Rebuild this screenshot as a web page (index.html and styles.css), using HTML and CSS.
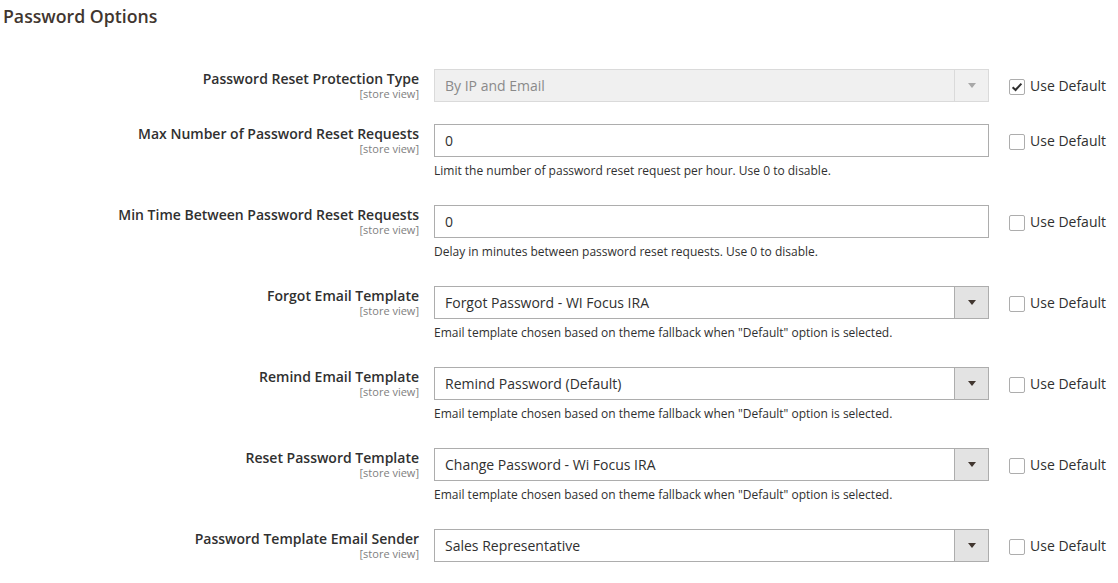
FILE: index.html
```html
<!DOCTYPE html>
<html>
<head>
<meta charset="utf-8">
<link rel="stylesheet" href="styles.css">
</head>
<body>
<div class="page">
  <h2 class="section-title">Password Options</h2>
  <div class="fields">
    <div class="row">
      <div class="label"><span class="label-text">Password Reset Protection Type</span><span class="scope">[store view]</span></div>
      <div class="control">
        <div class="select disabled"><span class="value">By IP and Email</span><span class="arrow"><i></i></span></div>
      </div>
      <label class="use-default"><span class="cb checked"><svg viewBox="0 0 16 16" width="16" height="16"><path d="M3.6 8.2 L6.6 11 L12.4 4.6" fill="none" stroke="#303030" stroke-width="2"/></svg></span>Use Default</label>
    </div>
    <div class="row">
      <div class="label"><span class="label-text">Max Number of Password Reset Requests</span><span class="scope">[store view]</span></div>
      <div class="control">
        <div class="input"><span class="value">0</span></div>
        <div class="note">Limit the number of password reset request per hour. Use 0 to disable.</div>
      </div>
      <label class="use-default"><span class="cb"></span>Use Default</label>
    </div>
    <div class="row">
      <div class="label"><span class="label-text">Min Time Between Password Reset Requests</span><span class="scope">[store view]</span></div>
      <div class="control">
        <div class="input"><span class="value">0</span></div>
        <div class="note">Delay in minutes between password reset requests. Use 0 to disable.</div>
      </div>
      <label class="use-default"><span class="cb"></span>Use Default</label>
    </div>
    <div class="row">
      <div class="label"><span class="label-text">Forgot Email Template</span><span class="scope">[store view]</span></div>
      <div class="control">
        <div class="select"><span class="value">Forgot Password - WI Focus IRA</span><span class="arrow"><i></i></span></div>
        <div class="note">Email template chosen based on theme fallback when "Default" option is selected.</div>
      </div>
      <label class="use-default"><span class="cb"></span>Use Default</label>
    </div>
    <div class="row">
      <div class="label"><span class="label-text">Remind Email Template</span><span class="scope">[store view]</span></div>
      <div class="control">
        <div class="select"><span class="value">Remind Password (Default)</span><span class="arrow"><i></i></span></div>
        <div class="note">Email template chosen based on theme fallback when "Default" option is selected.</div>
      </div>
      <label class="use-default"><span class="cb"></span>Use Default</label>
    </div>
    <div class="row">
      <div class="label"><span class="label-text">Reset Password Template</span><span class="scope">[store view]</span></div>
      <div class="control">
        <div class="select"><span class="value">Change Password - Wi Focus IRA</span><span class="arrow"><i></i></span></div>
        <div class="note">Email template chosen based on theme fallback when "Default" option is selected.</div>
      </div>
      <label class="use-default"><span class="cb"></span>Use Default</label>
    </div>
    <div class="row">
      <div class="label"><span class="label-text">Password Template Email Sender</span><span class="scope">[store view]</span></div>
      <div class="control">
        <div class="select"><span class="value">Sales Representative</span><span class="arrow"><i></i></span></div>
      </div>
      <label class="use-default"><span class="cb"></span>Use Default</label>
    </div>
  </div>
</div>
</body>
</html>
```

FILE: styles.css
```css
html, body {
  margin: 0;
  padding: 0;
  background: #ffffff;
}
body {
  font-family: "Open Sans", "Liberation Sans", sans-serif;
  color: #303030;
}
.page {
  padding: 0 0 0 3px;
}
.section-title {
  margin: 0;
  padding-top: 5px;
  height: 69px;
  box-sizing: border-box;
  font-size: 17.7px;
  font-weight: 600;
  line-height: 23px;
  color: #41362f;
}
.fields {
  display: flex;
  flex-direction: column;
  gap: 22px;
}
.row {
  display: grid;
  grid-template-columns: 416px 555px auto;
  column-gap: 15px;
  align-items: start;
}
.row .use-default {
  margin-left: 5px;
}
.label {
  display: flex;
  flex-direction: column;
  align-items: flex-end;
  text-align: right;
  padding-top: 1px;
}
.label-text {
  font-size: 14px;
  font-weight: 600;
  line-height: 18px;
  color: #303030;
}
.scope {
  font-size: 11px;
  line-height: 12px;
  color: #808080;
}
.control {
  display: flex;
  flex-direction: column;
}
.input, .select {
  height: 33px;
  box-sizing: border-box;
  border: 1px solid #adadad;
  background: #ffffff;
  display: flex;
  align-items: center;
  font-size: 14px;
  color: #303030;
}
.value {
  flex: 1;
  padding-left: 10px;
  line-height: 20px;
}
.select .arrow {
  width: 33px;
  height: 100%;
  border-left: 1px solid #adadad;
  background: #e3e3e3;
  display: flex;
  align-items: center;
  justify-content: center;
}
.select .arrow i {
  display: block;
  width: 0;
  height: 0;
  border-left: 4px solid transparent;
  border-right: 4px solid transparent;
  border-top: 5px solid #41362f;
  margin-top: -1px;
}
.select.disabled {
  background: #f0f0f0;
  border-color: #dadada;
}
.select.disabled .value {
  color: #8a8a8a;
}
.select.disabled .arrow {
  background: #f0f0f0;
  border-left-color: #dadada;
}
.select.disabled .arrow i {
  border-top-color: #a8a8a8;
}
.note {
  font-size: 12px;
  line-height: 17px;
  color: #303030;
  margin-top: 5px;
  padding-bottom: 4px;
}
.use-default {
  display: flex;
  align-items: center;
  gap: 5px;
  font-size: 14px;
  line-height: 20px;
  color: #303030;
  margin-top: 7px;
  white-space: nowrap;
}
.cb {
  width: 16px;
  height: 16px;
  box-sizing: border-box;
  border: 1px solid #adadad;
  border-radius: 2px;
  background: #ffffff;
  display: inline-flex;
  position: relative;
  top: 1px;
}
.cb svg {
  position: absolute;
  left: -1px;
  top: -1px;
}
```
